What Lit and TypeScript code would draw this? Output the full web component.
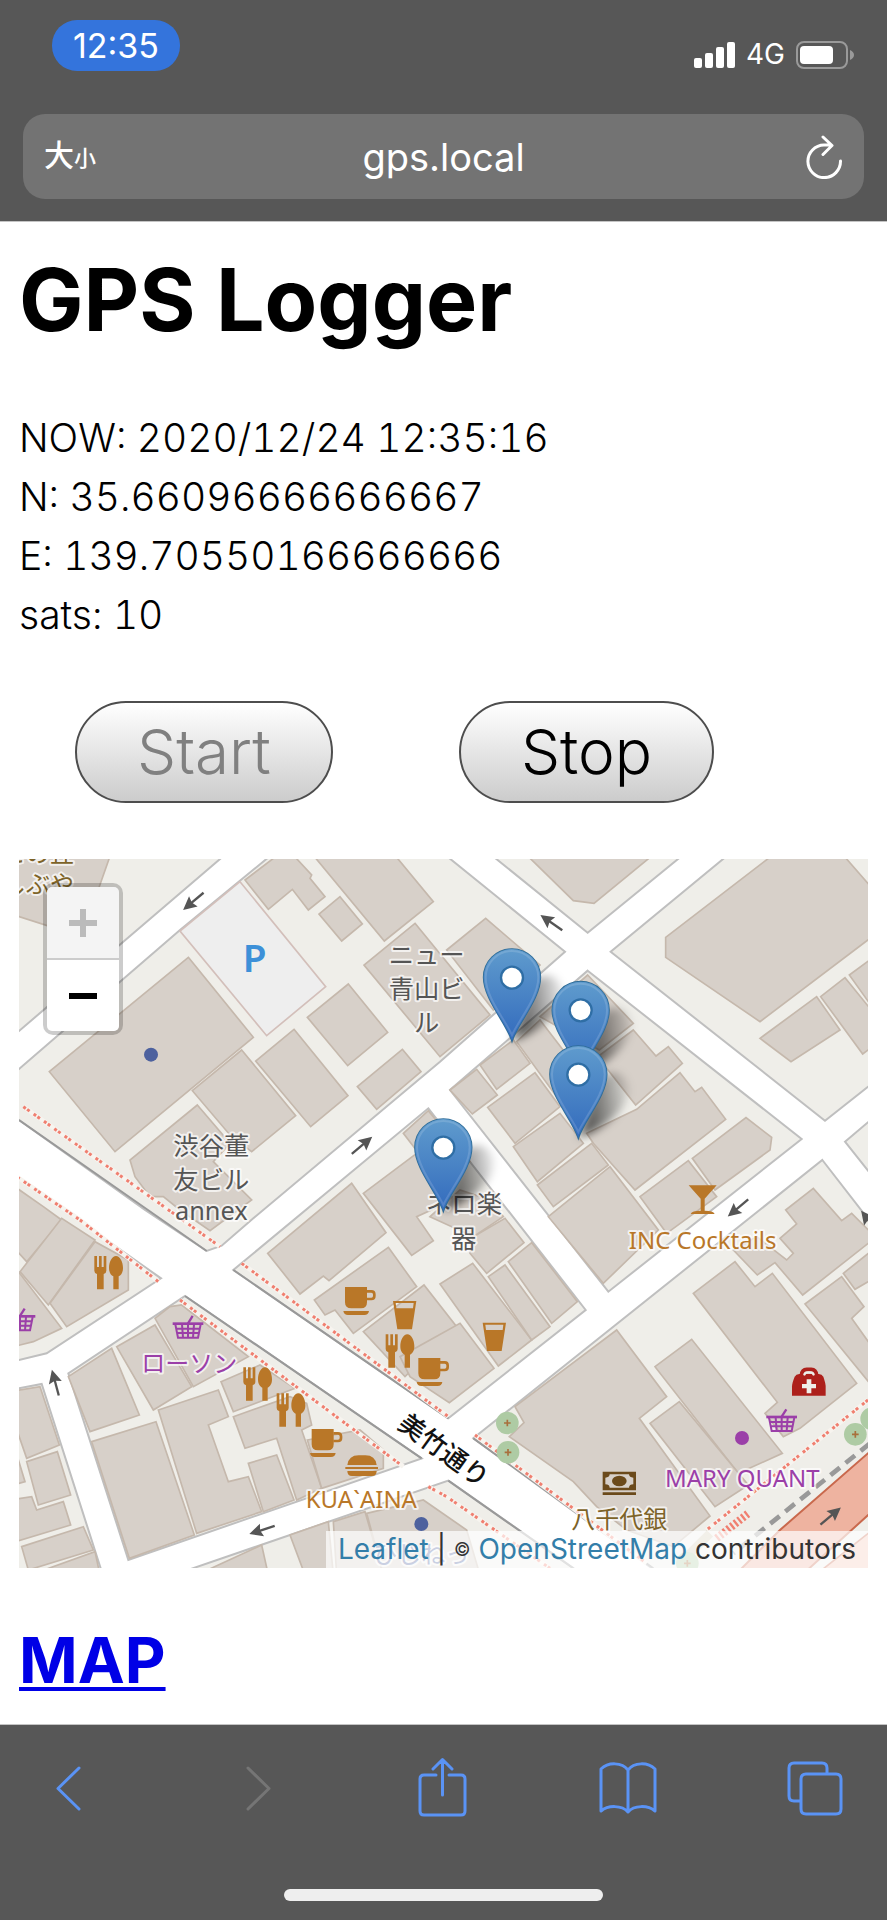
import { LitElement, html, svg, css } from "lit";
import { customElement, state } from "lit/decorators.js";

type Quad = { dx: number; dy: number; shapes: string[] };

// Street blocks; the white ground between them reads as road.
const BLOCKS = [
  "40,10 680,10 57,543 40,555",
  "40,672 57,657 540,240 820,10 1330,10 1695,305 1320,635 760,1105 665,1187 620,1203 435,1080 57,810 40,800",
  "1468,10 1763,248 2055,10",
  "2190,10 1832,305 2475,812 2630,690 2630,10",
  "1763,362 2405,867 1825,1325 1350,720",
  "2535,875 2630,795 2630,995",
  "2467,930 2630,1140 2630,2180 1990,2180 1420,1765",
  "1285,775 1757,1380 1345,1705 700,1260",
  "40,975 57,985 483,1285 140,1510 40,1534",
  "555,1338 1265,1825 385,2130 205,1570",
  "40,1618 125,1602 310,2180 40,2180",
  "520,2175 1345,1892 1750,2175",
];

const BUILDINGS: Quad[] = [
  {
    dx: 0,
    dy: 0,
    shapes: [
      "40,10 332,10 327,27 245,260 57,200 40,190",
      "735,90 840,10 875,10 935,75 930,85 975,140 925,180 877,118 805,178",
      "1020,140 1087,222 1025,273 957,192",
      "935,10 1180,10 1300,155 1153,273",
      "1245,220 1470,495 1320,620 1092,345",
      "565,322 760,562 345,905 148,665",
      "725,600 887,797 755,905 690,855 577,722",
      "882,538 1044,737 932,830 767,633",
      "1045,402 1163,547 1043,647 922,502",
      "1207,598 1263,665 1130,778 1072,710",
      "592,765 690,880 640,935 755,1050 630,1142 540,1080 490,1040 450,1040 405,980 390,930",
      "1210,850 1285,782 1410,935 1330,990 1260,915",
      "803,1210 1055,1000 1158,1148 987,1292 970,1278 900,1332",
      "1090,1030 1250,910 1360,1050 1250,1100 1300,1172 1235,1216",
      "1090,1445 1272,1305 1370,1430 1215,1580",
    ],
  },
  {
    dx: 1320,
    dy: 0,
    shapes: [
      "20,300 137,205 300,345 160,480",
      "443,375 580,520 478,600 300,500",
      "580,540 648,618 685,590 727,640 587,765 500,655 480,615",
      "720,668 765,725 785,712 857,808 585,1020 460,880 440,850 590,778",
      "120,645 220,570 270,640 170,718",
      "230,575 300,510 400,640 350,740",
      "30,720 110,658 172,735 97,792",
      "143,772 285,668 360,770 225,880",
      "220,890 360,790 430,880 292,995",
      "292,1005 455,880 505,945 340,1070",
      "325,1100 510,950 655,1140 490,1300",
      "600,1040 745,932 830,1040 680,1150",
      "757,925 918,803 995,862 990,900 825,1020",
      "255,10 400,152 462,160 645,10",
      "1005,10 1205,10 1310,130 1310,250 960,515 677,322 677,262",
      "960,565 1130,440 1200,540 1053,635",
      "1142,440 1215,383 1310,500 1310,580 1268,612",
      "1228,375 1310,315 1310,490",
    ],
  },
  {
    dx: 0,
    dy: 1080,
    shapes: [
      "30,100 80,155 185,30 130,-10 30,-80",
      "60,185 185,25 285,90 145,285",
      "150,280 285,95 385,150 385,240 200,350",
      "40,165 185,355 100,395 40,410",
      "465,325 510,290 545,285 745,440 580,530",
      "350,410 465,345 575,530 460,600",
      "205,500 335,415 418,615 270,665",
      "275,695 468,635 583,975 388,1045",
      "475,600 655,540 685,620 625,645 685,815 745,800 785,905 590,970",
      "663,515 780,465 885,535 700,605",
      "700,620 870,560 920,580 935,645 905,660 965,835 890,870 830,685 735,715",
      "745,760 830,735 882,870 790,905",
      "922,690 1080,660 1150,720 1150,775 965,835",
      "30,545 120,530 178,705 80,745 30,600",
      "80,755 172,725 212,855 115,885",
      "30,870 95,860 110,900 190,875 212,945 30,1000",
      "65,1010 250,950 280,1020 85,1080",
      "90,1095 285,1025 300,1095",
      "40,700 75,815 40,825",
      "1165,112 1250,230 1060,370 1005,300 975,315 943,270",
      "1000,935 1095,905 1150,1095 1010,1095",
      "1100,910 1270,870 1400,960 1440,1095 1150,1095",
      "870,975 985,935 1000,1095 915,1095",
      "590,1095 785,1005 805,1095",
    ],
  },
  {
    dx: 1320,
    dy: 1080,
    shapes: [
      "60,340 162,475 28,578 -90,500 -120,440",
      "0,222 98,160 275,390 175,468",
      "145,200 195,165 330,350 275,390",
      "205,155 275,98 412,275 335,340",
      "100,80 195,25 252,98 140,190 90,130",
      "-30,20 60,-60 150,-30 190,20 100,80",
      "225,590 530,360 680,560 598,625 810,918 700,1010 560,960 470,890 400,815 208,680 252,638",
      "645,470 755,388 1027,730 895,790",
      "630,640 718,575 925,825 825,890",
      "760,250 885,155 945,230 997,190 1250,520 1080,655 1030,680 975,610 1012,577",
      "1037,0 1120,-65 1205,32 1235,10 1310,85 1310,80 1088,255 1005,158 952,195 880,120 950,80 1040,150 1060,130 1020,85 1070,42",
      "1095,282 1205,200 1272,290 1235,325 1310,430 1310,545",
      "1210,190 1310,110 1310,200 1245,238",
    ],
  },
];

const FOOTWAYS = [
  "70,770 520,1090 660,1190",
  "40,973 240,1110 475,1295",
  "540,1350 1210,1850",
  "725,1240 1345,1700",
  "1425,1755 1940,2140",
  "1285,1910 1340,1940 1650,2155",
  "2604,1650 2120,2040",
];

const PINS = [
  [1536, 577],
  [1742, 675],
  [1735, 868],
  [1330, 1087],
];

const fork = (x: number, y: number) => svg`
  <g transform="translate(${x} ${y})" fill="#b97728">
    <path d="M0 0h8v33h6V0h8v33h6V0h8v44q0 8-8 10v46H8V54q-8-2-8-10z"/>
    <path d="M65 0c12 0 21 18 21 36 0 14-6 22-13 25v39H57V61c-7-3-13-11-13-25C44 18 53 0 65 0z"/>
  </g>`;

const cup = (x: number, y: number) => svg`
  <g transform="translate(${x} ${y})">
    <path fill="#b97728" d="M5 0h66v46q0 18-18 18H24Q5 64 5 46zM0 72h77q-2 12-14 12H14Q2 84 0 72z"/>
    <path fill="none" stroke="#b97728" stroke-width="8" d="M70 13h14q9 0 9 9v5q0 9-9 9H70"/>
  </g>`;

const glass = (x: number, y: number) => svg`
  <g transform="translate(${x} ${y})" fill="#b97728">
    <path fill-rule="evenodd" d="M0 0h70L57 85H13zM8 6l2 16h50l2-16z"/>
  </g>`;

const basket = (x: number, y: number) => svg`
  <g transform="translate(${x} ${y})" fill="none" stroke="#9b3fa8">
    <path stroke-width="7" d="M46 22L60 0"/>
    <path stroke-width="8" d="M0 23h92"/>
    <path stroke-width="6" d="M8 25l8 40h60l8-40M11 38h70M14 51h65M28 25l3 40M46 25v40M64 25l-3 40"/>
  </g>`;

const arrow = (x: number, y: number, turn: number) => svg`
  <g transform="translate(${x} ${y}) rotate(${turn})">
    <path fill="none" stroke="#555" stroke-width="7" d="M-40 0H10"/>
    <path fill="#555" d="M40 0L0-20 6 0 0 20z"/>
  </g>`;

const tree = (x: number, y: number) => svg`
  <g transform="translate(${x} ${y})">
    <circle r="34" fill="#aecba4"/>
    <path stroke="#a8703c" stroke-width="5" d="M-10 0h20M0-10v20"/>
  </g>`;

const pin = (x: number, y: number) => svg`
  <g transform="translate(${x} ${y})">
    <path fill="none" stroke="#2e6c97" stroke-width="5" d="M0-4C-18-60-85-130-85-195a85 85 0 0 1 170 0C85-130 18-60 0-4z"/>
    <path fill="url(#pinFill)" d="M0-4C-18-60-85-130-85-195a85 85 0 0 1 170 0C85-130 18-60 0-4z"/>
    <path fill="none" stroke="#fff" stroke-opacity=".14" stroke-width="6" d="M0-22C-22-70-79-135-79-195a79 79 0 0 1 158 0C79-135 22-70 0-22z"/>
    <circle cy="-194" r="33" fill="#fff" stroke="#2f6ea5" stroke-width="7"/>
  </g>`;

const pinShadow = (x: number, y: number) => svg`
  <path transform="translate(${x} ${y})" fill="url(#shade)" filter="url(#soft)"
    d="M0-4L50-150C70-215 130-215 150-165C165-110 90-30 0-4z"/>`;

@customElement("gps-map")
class GpsMap extends LitElement {
  static styles = css`
    :host {
      display: block;
      position: relative;
      overflow: hidden;
    }
    .tiles {
      display: block;
      width: 100%;
      height: auto;
    }
    .label {
      font-family: "Noto Sans", "Noto Sans CJK JP", sans-serif;
      font-size: 72px;
      text-anchor: middle;
      paint-order: stroke;
      stroke: #fff;
      stroke-opacity: 0.7;
      stroke-width: 12px;
      stroke-linejoin: round;
    }
    .gray { fill: #555; font-size: 76px; }
    .food { fill: #b97728; }
    .shop { fill: #9b3fa8; }
    .civic { fill: #7d6328; }
    .office { fill: #4d619e; }
    .street { fill: #111; font-size: 78px; font-weight: 500; }
    .parking { fill: #3d90d8; font-size: 116px; font-weight: 600; stroke: none; }
    .zoom {
      position: absolute;
      top: 24px;
      left: 24px;
      display: flex;
      flex-direction: column;
      border: 4px solid rgba(0, 0, 0, 0.2);
      border-radius: 10px;
      background: #ccc;
      background-clip: padding-box;
      gap: 2px;
    }
    .step {
      display: grid;
      place-items: center;
      width: 72px;
      height: 71px;
      padding: 0;
      border: 0;
      background: #fff;
      color: #000;
      border-radius: 0 0 5px 5px;
    }
    .step:first-child { border-radius: 5px 5px 0 0; }
    .step:disabled {
      background: #f4f4f4;
      color: #bbb;
    }
    .step svg { width: 28px; height: 28px; }
    .credit {
      position: absolute;
      right: 0;
      bottom: 0;
      display: flex;
      align-items: center;
      gap: 8px;
      padding: 0 12px;
      background: rgba(255, 255, 255, 0.7);
      color: #333;
      font-size: 28px;
      line-height: 37px;
    }
    .credit a {
      color: #337ea9;
      text-decoration: none;
    }
    .copy { font-size: 18px; }
  `;

  render() {
    return html`
      <svg class="tiles" viewBox="57 27 2547 2128" role="img" aria-label="Street map of the logged track">
        <defs>
          <linearGradient id="pinFill" x1="0" y1="0" x2="0" y2="1">
            <stop offset="0" stop-color="#5f9bcd"/>
            <stop offset="1" stop-color="#336bbd"/>
          </linearGradient>
          <linearGradient id="shade" x1="0" y1="0.5" x2="1" y2="0.3">
            <stop offset="0.2" stop-color="#000" stop-opacity=".6"/>
            <stop offset="1" stop-color="#000" stop-opacity=".08"/>
          </linearGradient>
          <filter id="soft" x="-30%" y="-30%" width="160%" height="160%">
            <feGaussianBlur stdDeviation="13"/>
          </filter>
        </defs>
        <rect x="57" y="27" width="2547" height="2128" fill="#fff"/>
        <g fill="#efeee9" stroke="#bfbfbf" stroke-width="6">
          ${BLOCKS.map((p) => svg`<polygon points=${p}/>`)}
        </g>
        <path fill="none" stroke="#999" stroke-width="6"
          d="M57 810L620 1203M700 1260L1345 1705M1420 1765L1960 2155M555 1338L1265 1825M1345 1892L1720 2155"/>
        <g fill="#d7d0c9" stroke="#c5b8ac" stroke-width="5">
          ${BUILDINGS.map(
            (q) => svg`<g transform="translate(${q.dx} ${q.dy})">
              ${q.shapes.map((p) => svg`<polygon points=${p}/>`)}
            </g>`
          )}
        </g>
        <polygon fill="#eee" stroke="#d3bfba" stroke-width="5" points="720,95 977,410 800,557 540,243"/>
        <path fill="#eeb3a0" stroke="#c9694d" stroke-width="6" d="M2630 1787L2340 2040 2200 2180H2400L2630 1972z"/>
        <path fill="#f3c6b6" stroke="#c9694d" stroke-width="5" d="M2630 2030L2440 2180H2630z"/>
        <path fill="none" stroke="#d3ccb6" stroke-width="26" d="M2130 2050L2060 2120"/>
        <g fill="none" stroke="#f7f4ef" stroke-width="14">
          ${FOOTWAYS.map((p) => svg`<polyline points=${p}/>`)}
        </g>
        <g fill="none" stroke="#f07f70" stroke-width="9" stroke-dasharray="9 5 9 15">
          ${FOOTWAYS.map((p) => svg`<polyline points=${p}/>`)}
          <path stroke-width="24" stroke-dasharray="7 7" d="M2150 2065L2245 1990"/>
        </g>
        <path fill="none" stroke="#999" stroke-width="14" stroke-dasharray="36 22" d="M2610 1780L2200 2110"/>

        ${tree(1522, 1719)}${tree(1524, 1807)}${tree(2566, 1753)}${tree(2615, 1706)}${tree(2062, 2140)}
        ${arrow(580, 154, 140)}${arrow(1654, 218, 215)}${arrow(1086, 886, -40)}
        ${arrow(2214, 1074, 140)}${arrow(166, 1598, -105)}${arrow(786, 2040, 162)}
        ${arrow(2492, 1998, -40)}${arrow(2608, 1114, -128)}
        <circle cx="453" cy="614" r="21" fill="#4d619e"/>
        <circle cx="1264" cy="2022" r="21" fill="#4d619e"/>
        <circle cx="2226" cy="1764" r="21" fill="#9b3fa8"/>

        ${fork(283, 1218)}${fork(1157, 1453)}${fork(730, 1552)}${fork(830, 1630)}
        ${cup(1030, 1311)}${cup(1250, 1524)}${cup(930, 1737)}
        ${glass(1179, 1353)}${glass(1448, 1418)}
        ${basket(518, 1398)}${basket(14, 1376)}${basket(2299, 1678)}
        <path fill="#b97728" d="M1042 1845q4-29 34-29h20q30 0 34 29zM1036 1851h98v6h-98zM1042 1863h88q0 15-14 15h-60q-14 0-14-15z"/>
        <path fill="#b97728" d="M2066 1006h84l-36 40v36q26 0 30 10h-72q4-10 30-10v-36z"/>
        <g transform="translate(1808 1865)">
          <path fill="#6b4a1b" fill-rule="evenodd" d="M0 0h100v56H0zM8 18v20q12 0 13 10h58q1-10 13-10V18q-12 0-13-10H21q-1 10-13 10zM0 62h100v8H0z"/>
          <ellipse cx="50" cy="28" rx="22" ry="16" fill="#6b4a1b"/>
        </g>
        <g transform="translate(2376 1552)">
          <path fill="none" stroke="#ad201b" stroke-width="11" d="M28 32V24Q30 6 44 6h14Q72 6 74 24v8"/>
          <path fill="#ad201b" d="M8 28q4-8 14-8h58q10 0 14 8 7 20 7 30v27H0V58q0-10 8-30z"/>
          <path fill="#efeee9" d="M44 36h14v14h14v13H58v15H44V63H30V50h14z"/>
          <path fill="none" stroke="#efeee9" stroke-width="6" d="M36 24q3-9 15-9t15 9"/>
        </g>

        <g class="label gray">
          <text x="1280" y="343">ニュー</text>
          <text x="1280" y="445">青山ビ</text>
          <text x="1280" y="547">ル</text>
          <text x="634" y="915">渋谷董</text>
          <text x="634" y="1016">友ビル</text>
          <text x="634" y="1109">annex</text>
          <text x="1392" y="1090">ネロ楽</text>
          <text x="1391" y="1195">器</text>
        </g>
        <g class="label food">
          <text x="1084" y="1974">KUA\`AINA</text>
          <text x="2108" y="1198">INC Cocktails</text>
        </g>
        <g class="label shop">
          <text x="568" y="1566">ローソン</text>
          <text x="2227" y="1912">MARY QUANT</text>
        </g>
        <g class="label civic">
          <text x="114" y="35">この丘</text>
          <text x="114" y="128">しぶや</text>
          <text x="1858" y="2034">八千代銀</text>
        </g>
        <text class="label office" x="1264" y="2138">ひじねっ</text>
        <text class="label street" transform="translate(1332 1801) rotate(36)" y="28">美竹通り</text>
        <text class="label parking" x="764" y="367">P</text>

        ${PINS.map(([x, y]) => pinShadow(x, y))}
        ${PINS.map(([x, y]) => pin(x, y))}
      </svg>
      <div class="zoom">
        <button class="step" disabled aria-label="Zoom in">
          <svg viewBox="0 0 28 28"><path d="M0 14h28M14 0v28" stroke="currentColor" stroke-width="6"/></svg>
        </button>
        <button class="step" aria-label="Zoom out">
          <svg viewBox="0 0 28 28"><path d="M0 14h28" stroke="currentColor" stroke-width="6"/></svg>
        </button>
      </div>
      <div class="credit">
        <a href="#leaflet">Leaflet</a><span>|</span><span class="copy">©</span>
        <a href="#osm">OpenStreetMap</a><span>contributors</span>
      </div>
    `;
  }
}

@customElement("app-root")
class AppRoot extends LitElement {
  @state() private logging = true;

  static styles = css`
    :host {
      display: flex;
      flex-direction: column;
      min-height: 100vh;
      background: #fff;
      color: #000;
      font-family: Inter, "Noto Sans CJK JP", sans-serif;
    }
    button { font-family: inherit; }
    .chrome {
      display: flex;
      flex-direction: column;
      gap: 43px;
      padding: 20px 23px 22px;
      background: #575757;
      border-bottom: 1px solid #c4c4c4;
      color: #fff;
    }
    .status {
      display: flex;
      justify-content: space-between;
      padding: 0 10px 0 29px;
    }
    .clock {
      padding: 0 21px;
      border-radius: 25px;
      background: #3474dc;
      font-size: 34px;
      line-height: 51px;
    }
    .radio {
      display: flex;
      align-items: center;
      gap: 11px;
      padding-top: 18px;
      font-size: 28px;
      line-height: 33px;
    }
    .bars { width: 41px; height: 26px; }
    .battery { width: 58px; height: 28px; }
    .address {
      display: grid;
      grid-template-columns: 1fr auto 1fr;
      align-items: center;
      height: 85px;
      padding: 0 21px;
      border-radius: 22px;
      background: #737373;
    }
    .plain {
      padding: 0;
      border: 0;
      background: none;
      color: inherit;
    }
    .size {
      justify-self: start;
      font-size: 30px;
      line-height: 40px;
      font-weight: 500;
    }
    .small { font-size: 22px; }
    .host {
      font-size: 38px;
      line-height: 48px;
    }
    .reload {
      justify-self: end;
      height: 44px;
    }
    .reload svg { width: 38px; height: 44px; }
    .page {
      display: flex;
      flex-direction: column;
      flex: 1;
      padding: 26px 19px 22px;
    }
    h1 {
      margin: 0 0 56px;
      font-size: 86px;
      line-height: 104px;
      font-weight: 700;
    }
    .fix {
      margin: 0 0 57px;
      font-size: 39px;
      line-height: 59px;
      font-weight: 300;
      font-variant-numeric: tabular-nums;
    }
    .line { margin: 0; }
    .actions {
      display: flex;
      gap: 126px;
      margin: 0 56px 56px;
    }
    .pill {
      padding: 0 60px;
      border: 2px solid #4d4d4d;
      border-radius: 51px;
      background: linear-gradient(#fff, #ccc);
      color: #000;
      font-size: 62px;
      line-height: 98px;
      font-weight: 300;
    }
    .pill:disabled { color: #808080; }
    h2 {
      margin: 52px 0 0;
      font-size: 63px;
      line-height: 80px;
      font-weight: 700;
    }
    h2 a {
      color: #0000e6;
      text-decoration-thickness: 4px;
      text-underline-offset: 4px;
    }
    .toolbar {
      display: flex;
      flex-direction: column;
      align-items: center;
      justify-content: space-between;
      height: 176px;
      padding-bottom: 19px;
      background: #575757;
      border-top: 1px solid #c4c4c4;
    }
    .tools {
      display: flex;
      justify-content: space-between;
      align-self: stretch;
      padding: 32px 42px 0 38px;
      color: #5a93f5;
    }
    .tool {
      width: 60px;
      height: 64px;
    }
    .tool:disabled { color: #757575; }
    .tool svg {
      display: block;
      width: 60px;
      height: 64px;
    }
    .home {
      width: 36%;
      height: 12px;
      border-radius: 6px;
      background: #eee;
    }
  `;

  private tool(label: string, d: string, disabled = false) {
    return html`
      <button class="plain tool" aria-label=${label} ?disabled=${disabled}>
        <svg viewBox="0 0 60 64" fill="none" stroke="currentColor" stroke-width="3"
          stroke-linecap="round" stroke-linejoin="round"><path d=${d}/></svg>
      </button>`;
  }

  render() {
    return html`
      <header class="chrome">
        <div class="status">
          <span class="clock">12:35</span>
          <span class="radio">
            <svg class="bars" viewBox="0 0 41 26" fill="#fff">
              <rect y="16" width="8" height="10" rx="2"/>
              <rect x="11" y="11" width="8" height="15" rx="2"/>
              <rect x="22" y="5" width="8" height="21" rx="2"/>
              <rect x="33" width="8" height="26" rx="2"/>
            </svg>
            <span>4G</span>
            <svg class="battery" viewBox="0 0 58 28">
              <rect x="1" y="1" width="50" height="26" rx="7" fill="none" stroke="#9a9a9a" stroke-width="2"/>
              <rect x="4" y="5" width="33" height="18" rx="4" fill="#fff"/>
              <path d="M54 9q4 2 4 5t-4 5z" fill="#9a9a9a"/>
            </svg>
          </span>
        </div>
        <div class="address">
          <button class="plain size" aria-label="Page settings">大<span class="small">小</span></button>
          <span class="host">gps.local</span>
          <button class="plain reload" aria-label="Reload">
            <svg viewBox="0 0 38 44" fill="none" stroke="#fff" stroke-width="3" stroke-linecap="round" stroke-linejoin="round">
              <path d="M26 10H19A16.300 16.300 0 1 0 35.500 26M18 2l9 8.500-9 9"/>
            </svg>
          </button>
        </div>
      </header>
      <main class="page">
        <h1>GPS Logger</h1>
        <div class="fix">
          <p class="line">NOW: 2020/12/24 12:35:16</p>
          <p class="line">N: 35.66096666666667</p>
          <p class="line">E: 139.70550166666666</p>
          <p class="line">sats: 10</p>
        </div>
        <div class="actions">
          <button class="pill" ?disabled=${this.logging} @click=${() => (this.logging = true)}>Start</button>
          <button class="pill" ?disabled=${!this.logging} @click=${() => (this.logging = false)}>Stop</button>
        </div>
        <gps-map></gps-map>
        <h2><a href="#map">MAP</a></h2>
      </main>
      <footer class="toolbar">
        <div class="tools">
          ${this.tool("Back", "M41 11L20 31.500 41 52")}
          ${this.tool("Forward", "M23 11L44 31.500 23 52", true)}
          ${this.tool("Share", "M24 18H12q-4 0-4 4v32q0 4 4 4h37q4 0 4-4V22q0-4-4-4H37M30.500 38V3M21 12l9.500-9.500L40 12")}
          ${this.tool("Bookmarks", "M30 13v42M30 13C24 5 10 5 3 12v42c7-6 21-6 27 1 6-7 20-7 27-1V12C50 5 36 5 30 13")}
          ${this.tool("Tabs", "M16 44H9q-5 0-5-5V11q0-5 5-5h28q5 0 5 5v6M21 17h30q5 0 5 5v30q0 5-5 5H21q-5 0-5-5V22q0-5 5-5z")}
        </div>
        <div class="home"></div>
      </footer>
    `;
  }
}
